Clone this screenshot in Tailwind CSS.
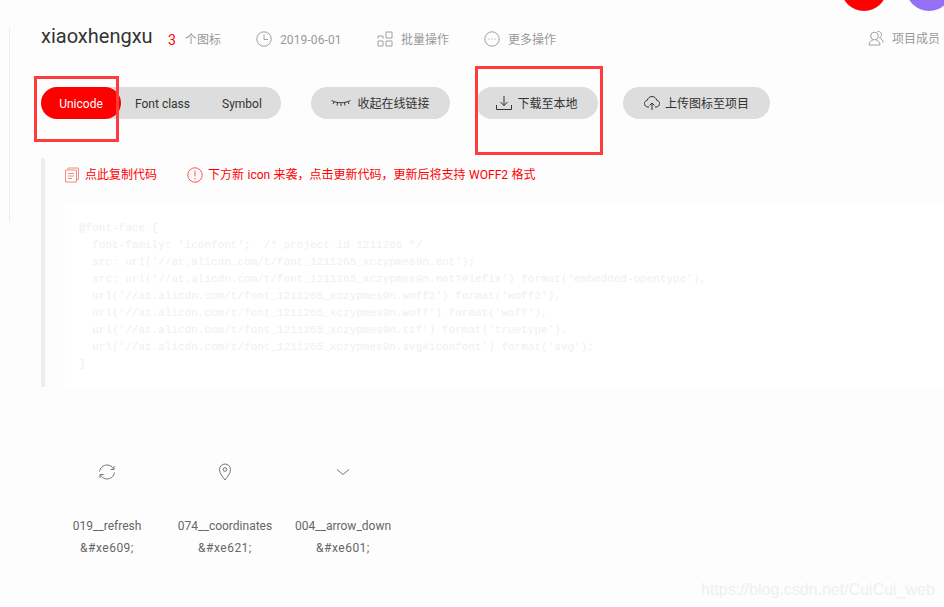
<!doctype html>
<html lang="zh">
    <head>
        <meta charset="UTF-8" />
        <meta name="viewport" content="width=device-width, initial-scale=1.0" />
        <title>iconfont</title>
        <script src="https://cdn.jsdelivr.net/npm/@tailwindcss/browser@4"></script>
    </head>
    <body class="bg-[#fdfdfd] font-['Roboto','Noto_Sans_CJK_SC',sans-serif]">
        <div class="relative w-[944px] h-[607px] overflow-hidden pl-[41px]">
            <!-- left rule + avatars -->
            <div class="absolute left-[9px] top-[27px] w-px h-[195px] bg-[#eeeeee]"></div>
            <div class="absolute left-[841px] top-[-35px] w-[46px] h-[46px] rounded-full bg-[#ff0000]"></div>
            <div class="absolute left-[906px] top-[-35px] w-[46px] h-[46px] rounded-full bg-[#9370f5]"></div>

            <!-- header -->
            <header class="flex items-center h-[78px] text-xs text-[#999999]">
                <h1 class="w-[127px] text-[20px] text-[#333333] relative top-[-3px]">xiaoxhengxu</h1>
                <span class="w-[17px] pt-[2px] text-sm text-[#ff0000]">3</span>
                <span class="w-[71px] pt-[2px]">个图标</span>
                <svg class="w-4 h-4 mr-2" viewBox="0 0 16 16" fill="none" stroke="#a0a0a0">
                    <circle cx="8" cy="8" r="7.2" />
                    <path d="M8 3.5V8.5H12" />
                </svg>
                <span class="w-[97px] pt-[2px] tracking-[0.1px]">2019-06-01</span>
                <svg class="w-4 h-4 mr-2" viewBox="0 0 16 16" fill="none" stroke="#a0a0a0">
                    <path d="M1 7.5V5L6 5V7.5M1 10H6V15H1ZM9 1H15V7H9ZM9 10H15V15H9Z" />
                </svg>
                <span class="w-[83px] pt-[2px]">批量操作</span>
                <svg class="w-4 h-4 mr-2" viewBox="0 0 16 16" fill="none" stroke="#a0a0a0">
                    <circle cx="8" cy="8" r="7.2" />
                    <path d="M4.5 8H5.5M7.5 8H8.5M10.5 8H11.5" />
                </svg>
                <span class="pt-[2px]">更多操作</span>
                <div class="ml-auto flex items-center gap-2 pr-[4px] relative top-[-1px]">
                    <svg class="w-4 h-4" viewBox="0 0 16 16" fill="none" stroke="#a0a0a0">
                        <circle cx="6.5" cy="6" r="3.8" />
                        <path d="M1 15C1 12 3 10.5 5 10M8 10C10 10.5 12 12 12 15H1M9.5 1.5C12 1 14 3 13.5 5.5C13.2 7 12.5 7.5 11.5 8C13.5 8.5 15 10 15 12.5" />
                    </svg>
                    <span class="pt-[2px]">项目成员</span>
                </div>
            </header>

            <!-- toolbar -->
            <div class="flex items-center h-8 mt-[9px] text-xs text-[#333333]">
                <div class="flex items-center w-[240px] h-8 rounded-full bg-[#dddddd]">
                    <span class="flex items-center justify-center w-[80px] h-8 pt-[2px] rounded-full bg-[#ff0000] text-white">Unicode</span>
                    <span class="ml-[14px] w-[87px] pt-[2px]">Font class</span>
                    <span class="pt-[2px]">Symbol</span>
                </div>
                <div class="flex items-center justify-center gap-[6px] ml-[30px] w-[139px] h-8 rounded-full bg-[#dddddd]">
                    <svg class="w-5 h-3" viewBox="0 0 20 12" fill="none" stroke="#333333">
                        <path d="M0.5 3.5C6 6.5 14 6.5 19.5 3.5M3 5L2 7M6.5 6L6 8.5M10 6.5V9M13.5 6L14 8.5M17 5L18 7" />
                    </svg>
                    <span class="pt-[2px]">收起在线链接</span>
                </div>
                <div class="flex items-center justify-center gap-[5px] ml-[26px] w-[122px] h-8 rounded-full bg-[#dddddd]">
                    <svg class="w-4 h-4" viewBox="0 0 16 16" fill="none" stroke="#333333">
                        <path d="M8 1V10.5M4.5 7L8 10.5L11.5 7M0.5 10V14.5H15.5V10" />
                    </svg>
                    <span class="pt-[2px]">下载至本地</span>
                </div>
                <div class="flex items-center justify-center gap-[5px] ml-[25px] w-[147px] h-8 rounded-full bg-[#dddddd]">
                    <svg class="w-4 h-4" viewBox="0 0 16 16" fill="none" stroke="#333333">
                        <path d="M5 12H4C2 12 0.5 10.5 0.5 8.5C0.5 6.8 1.7 5.5 3.3 5.3C3.8 3 5.7 1.5 8 1.5C10.3 1.5 12.2 3 12.7 5.3C14.3 5.5 15.5 6.8 15.5 8.5C15.5 10.5 14 12 12 12H11M8 15V8M5.5 10.5L8 8L10.5 10.5" />
                    </svg>
                    <span class="pt-[2px]">上传图标至项目</span>
                </div>
            </div>

            <!-- code panel -->
            <section class="mt-[39px] w-[903px] h-[229px] border-l-4 border-[#eeeeee] pl-[20px]">
                <div class="flex items-center h-[47px] -ml-px pb-[14px] text-xs text-[#ff0000]">
                    <svg class="w-4 h-4 mr-[5px]" viewBox="0 0 16 16" fill="none" stroke="#f0907a">
                        <path d="M4 2.5V1H14.5V12.5H13M1.5 3H12.5V15H1.5ZM4 6.5H10M4 9H10M4 11.5H8" />
                    </svg>
                    <span class="w-[102px]">点此复制代码</span>
                    <svg class="w-4 h-4 mr-[5px]" viewBox="0 0 16 16" fill="none" stroke="#ff5555">
                        <circle cx="8" cy="8" r="7.2" />
                        <path d="M8 3.5V9.5M8 11V12.5" />
                    </svg>
                    <span class="[word-spacing:0.5px]">下方新 icon 来袭，点击更新代码，更新后将支持 WOFF2 格式</span>
                </div>
                <pre class="h-[183px] bg-white rounded-sm pl-[14px] pt-[15px] font-['Liberation_Mono',monospace] text-[11px] leading-[17px] text-[#efefef]">@font-face {
  font-family: 'iconfont';  /* project id 1211265 */
  src: url('//at.alicdn.com/t/font_1211265_xczypmes9n.eot');
  src: url('//at.alicdn.com/t/font_1211265_xczypmes9n.eot?#iefix') format('embedded-opentype'),
  url('//at.alicdn.com/t/font_1211265_xczypmes9n.woff2') format('woff2'),
  url('//at.alicdn.com/t/font_1211265_xczypmes9n.woff') format('woff'),
  url('//at.alicdn.com/t/font_1211265_xczypmes9n.ttf') format('truetype'),
  url('//at.alicdn.com/t/font_1211265_xczypmes9n.svg#iconfont') format('svg');
}</pre>
            </section>

            <!-- icon list -->
            <ul class="flex ml-[7px] mt-[76px] text-xs text-[#666666]">
                <li class="w-[118px] flex flex-col items-center">
                    <svg class="w-[18px] h-[18px]" viewBox="0 0 18 18" fill="none" stroke="#777777">
                        <path d="M1.5 8.5C2 5 5 2 9 2C12 2 14.3 3.6 15.5 6M16.5 9.5C16 13 13 16 9 16C6 16 3.7 14.4 2.5 12M12.5 6.5H16V3M5.5 11.5H2V15" />
                    </svg>
                    <span class="mt-[34px] leading-[22px]">019__refresh</span>
                    <span class="leading-[22px] tracking-[0.5px]">&amp;#xe609;</span>
                </li>
                <li class="w-[118px] flex flex-col items-center">
                    <svg class="w-[18px] h-[18px]" viewBox="0 0 18 18" fill="none" stroke="#777777">
                        <path d="M9 17C6.5 13.5 3.5 10.5 3.5 6.5C3.5 3.4 6 1 9 1C12 1 14.5 3.4 14.5 6.5C14.5 10.5 11.5 13.5 9 17Z" />
                        <circle cx="9" cy="6.5" r="1.8" />
                    </svg>
                    <span class="mt-[34px] leading-[22px]">074__coordinates</span>
                    <span class="leading-[22px] tracking-[0.5px]">&amp;#xe621;</span>
                </li>
                <li class="w-[118px] flex flex-col items-center">
                    <svg class="w-[18px] h-[18px]" viewBox="0 0 18 18" fill="none" stroke="#777777">
                        <path d="M3 6.5L9 11.5L15 6.5" />
                    </svg>
                    <span class="mt-[34px] leading-[22px]">004__arrow_down</span>
                    <span class="leading-[22px] tracking-[0.5px]">&amp;#xe601;</span>
                </li>
            </ul>

            <!-- annotation boxes + watermark -->
            <div class="absolute left-[34px] top-[76px] w-[85px] h-[66px] border-[3px] border-[#ff3b3b]"></div>
            <div class="absolute left-[475px] top-[66px] w-[128px] h-[89px] border-[3px] border-[#ff3b3b]"></div>
            <div class="absolute left-[701px] top-[578px] font-['Liberation_Sans',sans-serif] text-[16px] text-[#efefef]">https://blog.csdn.net/CuiCui_web</div>
        </div>
    </body>
</html>
